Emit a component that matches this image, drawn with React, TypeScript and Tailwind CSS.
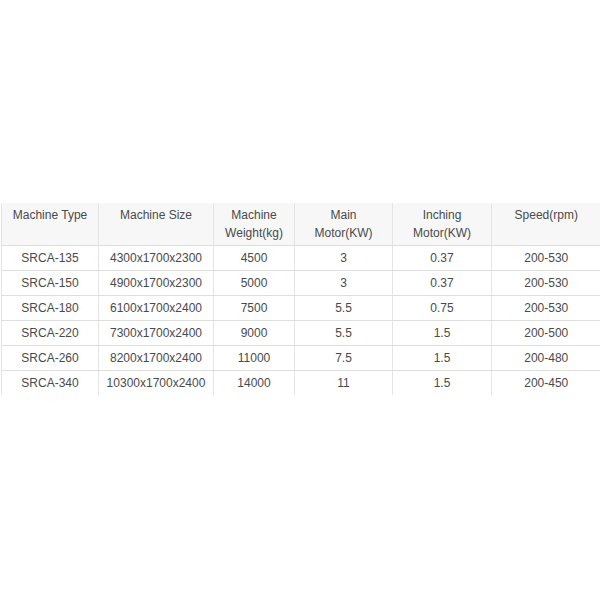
import React from 'react';

const headers = [
  { label: ['Machine Type'], w: 'w-[97px]' },
  { label: ['Machine Size'], w: 'w-[115px]' },
  { label: ['Machine', 'Weight(kg)'], w: 'w-[81px]' },
  { label: ['Main', 'Motor(KW)'], w: 'w-[98px]' },
  { label: ['Inching', 'Motor(KW)'], w: 'w-[99px]' },
  { label: ['Speed(rpm)'], w: 'w-[109px]' },
];

const rows = [
  ['SRCA-135', '4300x1700x2300', '4500', '3', '0.37', '200-530'],
  ['SRCA-150', '4900x1700x2300', '5000', '3', '0.37', '200-530'],
  ['SRCA-180', '6100x1700x2400', '7500', '5.5', '0.75', '200-530'],
  ['SRCA-220', '7300x1700x2400', '9000', '5.5', '1.5', '200-500'],
  ['SRCA-260', '8200x1700x2400', '11000', '7.5', '1.5', '200-480'],
  ['SRCA-340', '10300x1700x2400', '14000', '11', '1.5', '200-450'],
];

export default function App() {
  return (
    <div className="w-[600px] h-[600px] bg-white pt-[203px] pl-px font-['Liberation_Sans',Arial,sans-serif] text-[12px] text-[#4a4a4a]">
      <table className="border-collapse table-fixed w-[599px]">
        <thead>
          <tr className="bg-[#f7f7f7]">
            {headers.map((h, i) => (
              <th
                key={i}
                className={`${h.w} h-[42px] align-top pt-[3px] font-normal text-center leading-[18px] border-b border-[#dedede] ${i < 5 ? 'border-r border-r-[#e4e4e4]' : ''} ${i === 0 ? 'border-l border-l-[#e4e4e4]' : ''}`}
              >
                {h.label.map((l, j) => (
                  <div key={j}>{l}</div>
                ))}
              </th>
            ))}
          </tr>
        </thead>
        <tbody>
          {rows.map((r, ri) => (
            <tr key={ri}>
              {r.map((c, ci) => (
                <td
                  key={ci}
                  className={`h-[25px] text-center align-middle leading-[18px] ${ri < rows.length - 1 ? 'border-b border-[#dedede]' : ''} ${ci < 5 ? 'border-r border-r-[#e4e4e4]' : ''} ${ci === 0 ? 'border-l border-l-[#e4e4e4]' : ''}`}
                >
                  {c}
                </td>
              ))}
            </tr>
          ))}
        </tbody>
      </table>
    </div>
  );
}
